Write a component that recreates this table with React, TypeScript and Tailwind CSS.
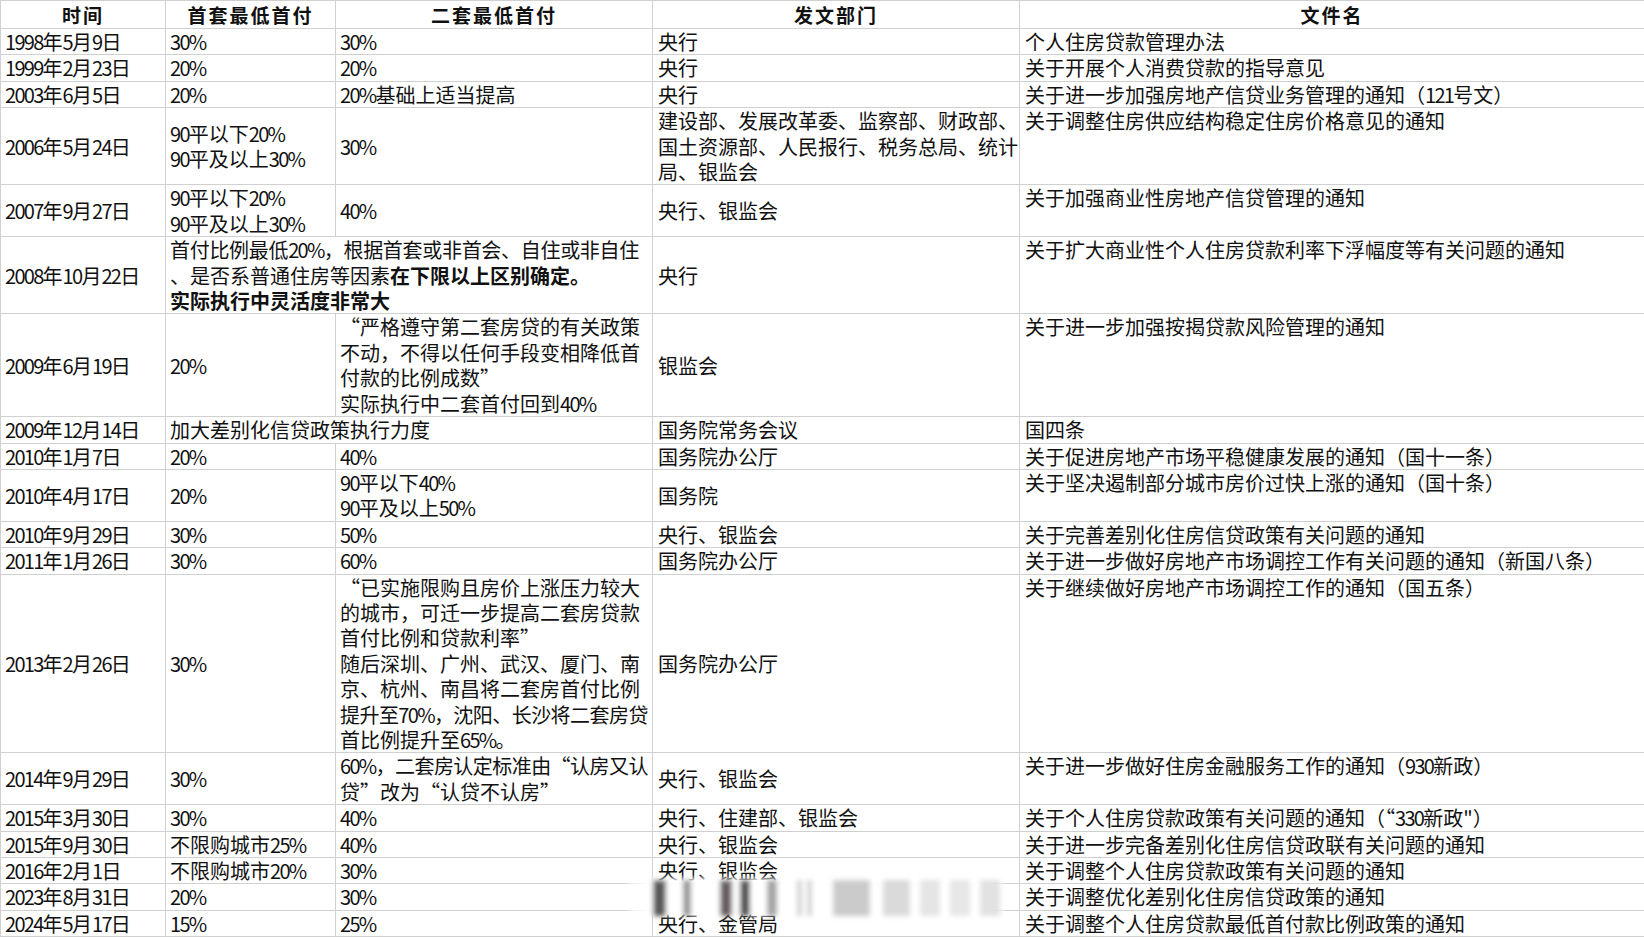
import React from 'react';

type Cell = string | string[] | React.ReactNode;

type Row = {
  date: string;
  first?: Cell;
  second?: Cell;
  merged?: Cell;
  dept: Cell;
  doc: Cell;
};

// digits in the sheet are a narrow face, tighten them up
function fmt(s: string) {
  return s.split(/([0-9%]+)/).map((p, i) =>
    /[0-9%]/.test(p) ? (
      <span key={i} className="tracking-[-1.7px]">
        {p}
      </span>
    ) : (
      p
    )
  );
}

// a leading "~" marks a line that needs squeezing to stay in its cell
function line(l: string) {
  if (l.startsWith('~')) return <span className="tracking-[-0.55px]">{fmt(l.slice(1))}</span>;
  return fmt(l);
}

function lines(c: Cell) {
  if (typeof c === 'string') return line(c);
  if (Array.isArray(c) && c.every((x) => typeof x === 'string'))
    return (c as string[]).map((l, i) => (
      <React.Fragment key={i}>
        {i > 0 && <br />}
        {line(l)}
      </React.Fragment>
    ));
  return c;
}

const rows: Row[] = [
  { date: '1998年5月9日', first: '30%', second: '30%', dept: '央行', doc: '个人住房贷款管理办法' },
  { date: '1999年2月23日', first: '20%', second: '20%', dept: '央行', doc: '关于开展个人消费贷款的指导意见' },
  { date: '2003年6月5日', first: '20%', second: '20%基础上适当提高', dept: '央行', doc: '关于进一步加强房地产信贷业务管理的通知（121号文）' },
  {
    date: '2006年5月24日',
    first: ['90平以下20%', '90平及以上30%'],
    second: '30%',
    dept: ['建设部、发展改革委、监察部、财政部、', '国土资源部、人民报行、税务总局、统计', '局、银监会'],
    doc: '关于调整住房供应结构稳定住房价格意见的通知',
  },
  {
    date: '2007年9月27日',
    first: ['90平以下20%', '90平及以上30%'],
    second: '40%',
    dept: '央行、银监会',
    doc: '关于加强商业性房地产信贷管理的通知',
  },
  {
    date: '2008年10月22日',
    merged: (
      <>
        <span className="tracking-[-0.3px]">{fmt('首付比例最低20%，根据首套或非首会、自住或非自住')}</span>
        <br />
        、是否系普通住房等因素<span className="font-bold">在下限以上区别确定。</span>
        <br />
        <span className="font-bold">实际执行中灵活度非常大</span>
      </>
    ),
    dept: '央行',
    doc: '关于扩大商业性个人住房贷款利率下浮幅度等有关问题的通知',
  },
  {
    date: '2009年6月19日',
    first: '20%',
    second: ['“严格遵守第二套房贷的有关政策', '不动，不得以任何手段变相降低首', '付款的比例成数”', '实际执行中二套首付回到40%'],
    dept: '银监会',
    doc: '关于进一步加强按揭贷款风险管理的通知',
  },
  { date: '2009年12月14日', merged: '加大差别化信贷政策执行力度', dept: '国务院常务会议', doc: '国四条' },
  { date: '2010年1月7日', first: '20%', second: '40%', dept: '国务院办公厅', doc: '关于促进房地产市场平稳健康发展的通知（国十一条）' },
  {
    date: '2010年4月17日',
    first: '20%',
    second: ['90平以下40%', '90平及以上50%'],
    dept: '国务院',
    doc: '关于坚决遏制部分城市房价过快上涨的通知（国十条）',
  },
  { date: '2010年9月29日', first: '30%', second: '50%', dept: '央行、银监会', doc: '关于完善差别化住房信贷政策有关问题的通知' },
  { date: '2011年1月26日', first: '30%', second: '60%', dept: '国务院办公厅', doc: '关于进一步做好房地产市场调控工作有关问题的通知（新国八条）' },
  {
    date: '2013年2月26日',
    first: '30%',
    second: [
      '“已实施限购且房价上涨压力较大',
      '的城市，可迁一步提高二套房贷款',
      '首付比例和贷款利率”',
      '随后深圳、广州、武汉、厦门、南',
      '京、杭州、南昌将二套房首付比例',
      '~提升至70%，沈阳、长沙将二套房贷',
      '首比例提升至65%。',
    ],
    dept: '国务院办公厅',
    doc: '关于继续做好房地产市场调控工作的通知（国五条）',
  },
  {
    date: '2014年9月29日',
    first: '30%',
    second: ['~60%，二套房认定标准由“认房又认', '贷”改为“认贷不认房”'],
    dept: '央行、银监会',
    doc: '关于进一步做好住房金融服务工作的通知（930新政）',
  },
  { date: '2015年3月30日', first: '30%', second: '40%', dept: '央行、住建部、银监会', doc: '关于个人住房贷款政策有关问题的通知（“330新政"）' },
  { date: '2015年9月30日', first: '不限购城市25%', second: '40%', dept: '央行、银监会', doc: '关于进一步完备差别化住房信贷政联有关问题的通知' },
  { date: '2016年2月1日', first: '不限购城市20%', second: '30%', dept: '央行、银监会', doc: '关于调整个人住房贷款政策有关问题的通知' },
  { date: '2023年8月31日', first: '20%', second: '30%', dept: '', doc: '关于调整优化差别化住房信贷政策的通知' },
  { date: '2024年5月17日', first: '15%', second: '25%', dept: '央行、金管局', doc: '关于调整个人住房贷款最低首付款比例政策的通知' },
];

const td = 'border border-[#d0d0d0] px-[4px] py-0 whitespace-nowrap align-middle';

function Watermark() {
  const bars: [number, number, string][] = [
    [26, 13, '#2a2a2a'],
    [56, 8, '#777'],
    [93, 12, '#3a3030'],
    [113, 10, '#1e1e1e'],
    [140, 10, '#8a8a8a'],
    [170, 5, '#c4c4c4'],
    [180, 5, '#c4c4c4'],
    [206, 37, '#bdbdbd'],
    [256, 27, '#cfcfcf'],
    [293, 20, '#dedede'],
    [323, 20, '#e0e0e0'],
    [353, 20, '#dadada'],
  ];
  return (
    <svg className="absolute left-[624px] top-[872px]" width="384" height="50" viewBox="0 0 384 50">
      <defs>
        <filter id="wm" x="-10%" y="-30%" width="120%" height="160%">
          <feGaussianBlur stdDeviation="2.4" />
        </filter>
        <linearGradient id="wmfade" x1="0" x2="1" y1="0" y2="0">
          <stop offset="0" stopColor="#fff" stopOpacity="0.5" />
          <stop offset="0.05" stopColor="#fff" stopOpacity="0.97" />
          <stop offset="0.95" stopColor="#fff" stopOpacity="0.97" />
          <stop offset="1" stopColor="#fff" stopOpacity="0.5" />
        </linearGradient>
      </defs>
      <g filter="url(#wm)">
        <rect x="4" y="6" width="376" height="38" fill="url(#wmfade)" />
        {bars.map(([x, w, c], i) => (
          <rect key={i} x={x + 3} y="8" width={w} height="36" fill={c} opacity="0.78" />
        ))}
      </g>
    </svg>
  );
}

export default function App() {
  return (
    <div className="relative w-[1644px] h-[937px] overflow-hidden bg-white text-[#111] text-[20px] leading-[25.4px] font-['Noto_Sans_CJK_SC',sans-serif]">
      <table className="w-[1644px] table-fixed border-collapse">
        <colgroup>
          <col className="w-[165px]" />
          <col className="w-[170px]" />
          <col className="w-[317px]" />
          <col className="w-[367px]" />
          <col className="w-[625px]" />
        </colgroup>
        <thead>
          <tr className="h-[28px]">
            {['时间', '首套最低首付', '二套最低首付', '发文部门', '文件名'].map((h) => (
              <th key={h} className="border border-[#d0d0d0] p-0 text-center font-bold text-[19px] tracking-[2px]">
                {h}
              </th>
            ))}
          </tr>
        </thead>
        <tbody>
          {rows.map((r) => (
            <tr key={r.date}>
              <td className={td}>{fmt(r.date)}</td>
              {r.merged ? (
                <td colSpan={2} className={td}>
                  {lines(r.merged)}
                </td>
              ) : (
                <>
                  <td className={td}>{lines(r.first)}</td>
                  <td className={td}>{lines(r.second)}</td>
                </>
              )}
              <td className={`${td} pl-[5px]`}>{lines(r.dept)}</td>
              <td className="border border-[#d0d0d0] px-[5px] py-0 whitespace-nowrap align-top">{lines(r.doc)}</td>
            </tr>
          ))}
        </tbody>
      </table>
      <Watermark />
    </div>
  );
}
